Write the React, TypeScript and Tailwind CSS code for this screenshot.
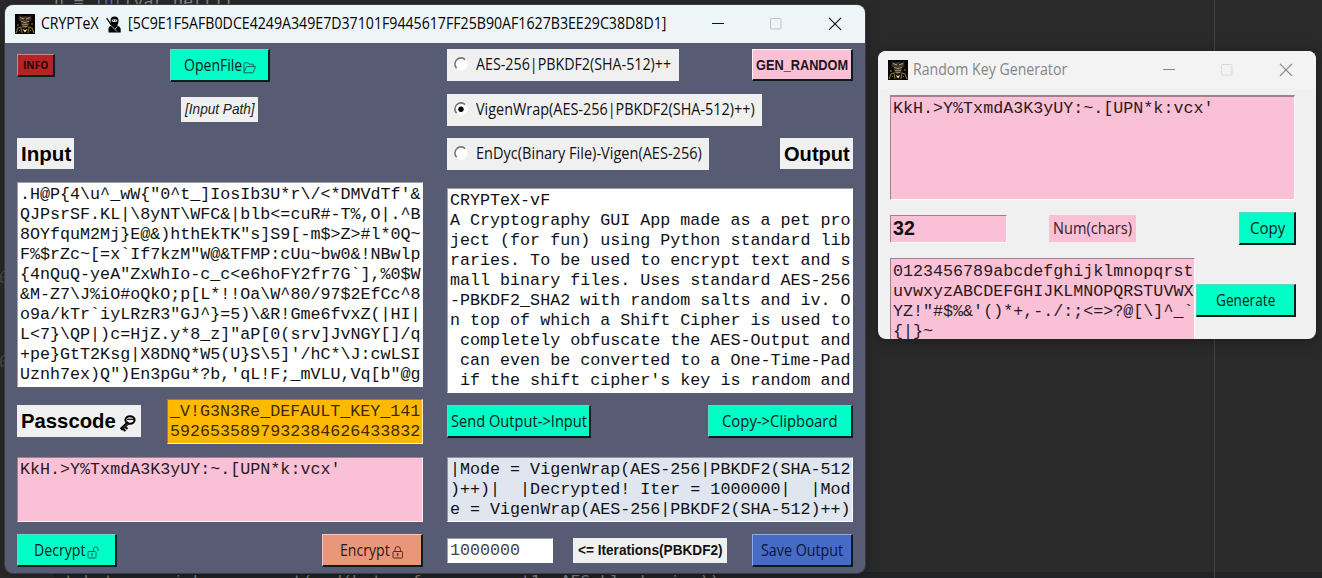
import { useLayoutEffect, useRef, type ReactNode } from "react";

function Fit({ w, children, className = "" }: { w: number; children: string; className?: string }) {
  const ref = useRef<HTMLSpanElement>(null);
  useLayoutEffect(() => {
    const el = ref.current;
    if (el) el.style.transform = `scaleX(${w / el.offsetWidth})`;
  }, [w, children]);
  return (
    <span className={`flex shrink-0 ${className}`} style={{ width: w }}>
      <span ref={ref} className="inline-block shrink-0 origin-left whitespace-pre">{children}</span>
    </span>
  );
}

const ui = "font-['Open_Sans','Noto_Sans',sans-serif]";
const arial = "font-['Liberation_Sans',Arial,sans-serif]";
const mono = "font-['Liberation_Mono','Courier_New',monospace] text-[16.7px] leading-[20px] whitespace-pre";

function Btn({ className, children }: { className: string; children: ReactNode }) {
  return (
    <button
      className={`flex shrink-0 items-center justify-center border-2 border-t-[1px] border-l-[1px] border-r-[#061f1c] border-b-[#061f1c] text-[15.5px] leading-5 text-[#06211e] ${className}`}
    >
      {children}
    </button>
  );
}

const green = "bg-[#00ffc6] border-t-[#5fd9c0] border-l-[#5fd9c0]";

function Radio({ on, w, className, children }: { on?: boolean; w: number; className: string; children: string }) {
  return (
    <label className={`flex h-8 shrink-0 items-center bg-[#f0f0f0] pl-[7px] text-[15.5px] text-[#111] ${className}`}>
      <svg width="14" height="14" viewBox="0 0 14 14" className="mr-2 -mt-[3px] shrink-0">
        <circle cx="7" cy="7" r="6" fill="#fff" />
        <path d="M2.7 11.3A6 6 0 0 1 11.3 2.7" fill="none" stroke="#777" strokeWidth="1.6" />
        <path d="M11.3 2.7A6 6 0 0 1 2.7 11.3" fill="none" stroke="#fff" strokeWidth="1.2" />
        {on && <circle cx="7" cy="7.2" r="2.7" fill="#000" />}
      </svg>
      <Fit w={w}>{children}</Fit>
    </label>
  );
}

function AppIcon() {
  return (
    <svg width="20" height="20" viewBox="0 0 20 20" className="shrink-0">
      <rect width="20" height="20" fill="#090706" />
      <path d="M4 1l2 2 4-1 4 1 2-2 .5 5-2.500 2H6L3.500 6z" fill="#3f3327" />
      <path d="M5 3.500l4 1.500M15 3.500l-4 1.500M6 7.500l4 1 4-1" stroke="#b39c80" strokeWidth="1" fill="none" />
      <path d="M6 9h8l-1 4-3 1.500-3-1.500z" fill="#4f4132" />
      <path d="M7 10.500h6M8 12.500h4" stroke="#a08a6c" strokeWidth=".8" />
      <path d="M1 19l2-5 3-1 1 6M19 19l-2-5-3-1-1 6" stroke="#80691f" strokeWidth="1.2" fill="none" />
      <path d="M7.500 15l2.500 3.500 2.500-3.500-2.500 1z" fill="#f1dfbd" />
      <path d="M4 16l1 1M15 16l1 1M2 11h2M16 10h2" stroke="#8f7a2c" />
    </svg>
  );
}

function Ninja() {
  return (
    <svg width="16" height="17" viewBox="0 0 16 17" className="shrink-0">
      <path d="M.7 2.2L5.500 9.300" stroke="#000" strokeWidth="1.200" />
      <path d="M4.500 4.500a4 4 0 0 1 8 0c0 2-.5 4-1.400 5 1.800.6 3.300 1.700 3.600 3.400V16.500H2.500V13c0-1.700 1-2.900 3.300-3.500C4.900 8.500 4.500 6.500 4.500 4.500z" fill="#000" />
      <path d="M5.800 3.700Q8.500 2.700 11.200 3.700V5.500Q8.500 6.300 5.800 5.500z" fill="#edf5f9" />
      <path d="M6.800 4.600h1M9.300 4.600h1" stroke="#000" strokeWidth=".9" />
      <path d="M5.500 10l5.500 5.500M11.500 10.500l-2.500 2.500" stroke="#d6e0e4" strokeWidth=".8" />
    </svg>
  );
}

function Controls({ color, dim }: { color: string; dim: string }) {
  return (
    <svg width="130" height="14" viewBox="0 0 130 14" fill="none" className="shrink-0">
      <path d="M0 6.500h12" stroke={color} />
      <rect x="58.500" y="1.500" width="10.500" height="10.500" rx="1" stroke={dim} />
      <path d="M117 .8l12 12M129 .8l-12 12" stroke={color} strokeWidth="1.200" />
    </svg>
  );
}

function Folder() {
  return (
    <svg width="13" height="12" viewBox="0 0 13 12" className="mt-[5px] ml-[1px] shrink-0" fill="none" stroke="#0b6b5a" strokeWidth="1">
      <path d="M1 10.500V1.500L2 .8h3l1 1.400h4.500V4.500M1 10.500L3.500 4.500H12.500L10 10.800H1z" />
    </svg>
  );
}

function Lock({ open, color }: { open?: boolean; color: string }) {
  return (
    <svg width="12" height="13" viewBox="0 0 12 13" className="mt-[5px] ml-[2px] shrink-0" fill="none" stroke={color}>
      <rect x="1" y="5.500" width={open ? 8 : 9.500} height="6.500" rx=".7" />
      <path d={open ? "M6.500 5.500V3.200a2.200 2.200 0 0 1 4.500 0V5" : "M3 5.500V3.300a2.700 2.700 0 0 1 5.400 0V5.500"} />
      <path d={open ? "M5 7.500v3M4 8h2" : "M5.700 7.500v3M4.700 8h2"} />
    </svg>
  );
}

function Key() {
  return (
    <svg width="17" height="17" viewBox="0 0 17 17" className="mt-[4px] ml-[3px] shrink-0" fill="none" stroke="#000">
      <ellipse cx="11" cy="5" rx="4.600" ry="3.700" strokeWidth="2" />
      <path d="M8 4.300h7.500" strokeWidth="1.200" />
      <path d="M9.500 7.500L2 14.500" strokeWidth="3.200" />
      <path d="M2 12.500l4.500 3.500M4.500 10.500l4 3.500" strokeWidth="2" />
      <path d="M9 8.500L4 13.500" stroke="#8a8a8a" strokeWidth=".7" />
    </svg>
  );
}

function FoldMark({ className }: { className: string }) {
  return (
    <svg width="5" height="14" viewBox="0 0 5 14" fill="none" stroke="#55585c" className={className}>
      <path d="M5 1L1 5v8h4M2.500 8H5" />
    </svg>
  );
}

const inputText = [
  ".H@P{4\\u^_wW{\"0^t_]IosIb3U*r\\/<*DMVdTf'&",
  "QJPsrSF.KL|\\8yNT\\WFC&|blb<=cuR#-T%,O|.^B",
  "8OYfquM2Mj}E@&)hthEkTK\"s]S9[-m$>Z>#l*0Q~",
  "F%$rZc~[=x`If7kzM\"W@&TFMP:cUu~bw0&!NBwlp",
  "{4nQuQ-yeA\"ZxWhIo-c_c<e6hoFY2fr7G`],%0$W",
  "&M-Z7\\J%iO#oQkO;p[L*!!Oa\\W^80/97$2EfCc^8",
  "o9a/kTr`iyLRzR3\"GJ^}=5)\\&R!Gme6fvxZ(|HI|",
  "L<7}\\QP|)c=HjZ.y*8_z]\"aP[0(srv]JvNGY[]/q",
  "+pe}GtT2Ksg|X8DNQ*W5(U}S\\5]'/hC*\\J:cwLSI",
  "Uznh7ex)Q\")En3pGu*?b,'qL!F;_mVLU,Vq[b\"@g",
].join("\n");

const outputText = [
  "CRYPTeX-vF",
  "A Cryptography GUI App made as a pet pro",
  "ject (for fun) using Python standard lib",
  "raries. To be used to encrypt text and s",
  "mall binary files. Uses standard AES-256",
  "-PBKDF2_SHA2 with random salts and iv. O",
  "n top of which a Shift Cipher is used to",
  " completely obfuscate the AES-Output and",
  " can even be converted to a One-Time-Pad",
  " if the shift cipher's key is random and",
].join("\n");

const logText = [
  "|Mode = VigenWrap(AES-256|PBKDF2(SHA-512",
  ")++)|  |Decrypted! Iter = 1000000|  |Mod",
  "e = VigenWrap(AES-256|PBKDF2(SHA-512)++)",
].join("\n");

const keyText = "KkH.>Y%TxmdA3K3yUY:~.[UPN*k:vcx'";
const charText = "0123456789abcdefghijklmnopqrst\nuvwxyzABCDEFGHIJKLMNOPQRSTUVWX\nYZ!\"#$%&'()*+,-./:;<=>?@[\\]^_`\n{|}~";

function MainWindow() {
  return (
    <section className="absolute top-[5px] left-[5px] flex h-[568px] w-[860px] flex-col overflow-hidden rounded-lg bg-[#575b73] shadow-[0_0_0_1px_#3b3d42,0_2px_14px_rgba(0,0,0,0.35)]">
      <header className="flex h-[38px] shrink-0 items-center bg-[#edf5f9] pl-[10px] text-[15.5px] text-black">
        <AppIcon />
        <Fit w={58} className="ml-[6px]">CRYPTeX</Fit>
        <div className="mr-[6px] ml-[7px] mt-[1px]"><Ninja /></div>
        <Fit w={538}>[5C9E1F5AFB0DCE4249A349E7D37101F9445617FF25B90AF1627B3EE29C38D8D1]</Fit>
        <div className="ml-[46px]"><Controls color="#111" dim="#b9c2c6" /></div>
      </header>
      <div className="flex gap-6 px-3 pt-[6px]">
        <div className="flex w-[406px] flex-col">
          <div className="flex h-[33px] items-center">
            <Btn className="h-[23px] w-[38px] border-t-[#d98080] border-l-[#d98080] bg-[#b32428] font-bold">
              <Fit w={25} className="text-[11px] text-[#2c0707]">INFO</Fit>
            </Btn>
            <Btn className={`ml-[115px] h-[33px] w-[100px] ${green}`}>
              <Fit w={58}>OpenFile</Fit>
              <Folder />
            </Btn>
          </div>
          <div className={`mt-[15px] ml-[164px] flex h-[25px] w-[77px] items-center justify-center bg-[#f0f0f0] text-[14px] text-[#222] italic ${arial}`}>
            <Fit w={70}>[Input Path]</Fit>
          </div>
          <div className={`mt-4 flex h-[31px] w-[57px] items-center justify-center bg-[#f0f0f0] text-[21px] font-bold ${arial}`}>
            <Fit w={50}>Input</Fit>
          </div>
          <pre className={`mt-[13px] h-[205px] overflow-hidden border border-[#a0a0a0] border-r-white border-b-white bg-white pt-[2px] pl-[2px] text-[#111] ${mono}`}>{inputText}</pre>
          <div className="mt-3 flex h-[45px] items-center justify-between">
            <div className={`-mt-px flex h-8 w-[124px] items-center bg-[#f0f0f0] pl-1 text-[20.500px] font-bold ${arial}`}>
              <Fit w={95}>Passcode</Fit>
              <Key />
            </div>
            <pre className={`h-[45px] w-[256px] overflow-hidden border border-[#a27f20] border-r-[#fff0c0] border-b-[#fff0c0] bg-[#ffb900] pt-[2px] pl-[2px] text-[#3d2b00] ${mono}`}>{"_V!G3N3Re_DEFAULT_KEY_141\n5926535897932384626433832"}</pre>
          </div>
          <pre className={`mt-[13px] h-[65px] overflow-hidden border border-[#a0808c] border-r-[#fff0f6] border-b-[#fff0f6] bg-[#fac0d6] pt-[2px] pl-[2px] text-[#2a1a20] ${mono}`}>{keyText}</pre>
          <div className="mt-3 flex justify-between">
            <Btn className={`h-[33px] w-[100px] ${green}`}>
              <Fit w={51}>Decrypt</Fit>
              <Lock open color="#0b6b5a" />
            </Btn>
            <Btn className="h-[33px] w-[101px] border-t-[#f6c8b8] border-l-[#f6c8b8] bg-[#e9967a]">
              <Fit w={50} className="text-[#2e1a14]">Encrypt</Fit>
              <Lock color="#5a2c1e" />
            </Btn>
          </div>
        </div>
        <div className="flex w-[406px] flex-col">
          <div className="flex justify-between">
            <Radio w={195} className="w-[232px]">AES-256|PBKDF2(SHA-512)++</Radio>
            <Btn className={`h-8 w-[101px] border-t-[#fff0f6] border-l-[#fff0f6] bg-[#fac0d6] font-bold ${arial}`}>
              <Fit w={92} className="text-[14px] text-[#22141a]">GEN_RANDOM</Fit>
            </Btn>
          </div>
          <Radio on w={279} className="mt-[13px] w-[315px]">VigenWrap(AES-256|PBKDF2(SHA-512)++)</Radio>
          <div className="mt-3 flex justify-between">
            <Radio w={226} className="w-[262px]">EnDyc(Binary File)-Vigen(AES-256)</Radio>
            <div className={`flex h-[31px] w-[73px] items-center justify-center bg-[#f0f0f0] text-[21px] font-bold ${arial}`}>
              <Fit w={66}>Output</Fit>
            </div>
          </div>
          <pre className={`mt-[18px] h-[205px] overflow-hidden border border-[#a0a0a0] border-r-white border-b-white bg-white pt-[2px] pl-[2px] text-[#111] ${mono}`}>{outputText}</pre>
          <div className="mt-3 flex justify-between">
            <Btn className={`h-[33px] w-[144px] ${green}`}>
              <Fit w={136}>{"Send Output->Input"}</Fit>
            </Btn>
            <Btn className={`h-[33px] w-[145px] ${green}`}>
              <Fit w={116}>{"Copy->Clipboard"}</Fit>
            </Btn>
          </div>
          <pre className={`mt-[19px] h-[65px] overflow-hidden border border-[#90949c] border-r-white border-b-white bg-[#e0e6f0] pt-[2px] pl-[2px] text-[#111] ${mono}`}>{logText}</pre>
          <div className="mt-3 flex h-[33px] items-center">
            <div className={`flex h-[25px] w-[106px] items-center border border-[#a0a0a0] border-r-white border-b-white bg-white pl-[2px] text-[#444] ${mono}`}>1000000</div>
            <div className={`ml-5 flex h-[25px] w-[154px] items-center justify-center bg-[#f0f0f0] text-[14px] font-bold text-[#111] ${arial}`}>
              <Fit w={145}>{"<= Iterations(PBKDF2)"}</Fit>
            </div>
            <Btn className="ml-[25px] h-[33px] w-[101px] border-t-[#8fa8e0] border-l-[#8fa8e0] bg-[#466bc5]">
              <Fit w={82} className="text-[#0a1638]">Save Output</Fit>
            </Btn>
          </div>
        </div>
      </div>
    </section>
  );
}

function KeyWindow() {
  return (
    <section className="absolute top-[51px] left-[878px] flex h-[288px] w-[438px] flex-col overflow-hidden rounded-lg bg-[#f0f0f0] shadow-[0_2px_14px_rgba(0,0,0,0.35)]">
      <header className="flex h-[38px] shrink-0 items-center bg-[#f3f3f3] pl-[10px] text-[15.5px] text-[#858585]">
        <AppIcon />
        <Fit w={154} className="ml-[5px]">Random Key Generator</Fit>
        <div className="ml-[96px]"><Controls color="#858585" dim="#dadada" /></div>
      </header>
      <div className="flex flex-col pt-[6px] pl-3">
        <pre className={`h-[105px] w-[405px] shrink-0 border border-t-2 border-[#a0808c] border-r-white border-b-white bg-[#fac0d6] pt-[2px] pl-[2px] text-[#2a1a20] ${mono}`}>{keyText}</pre>
        <div className="mt-3 flex h-[33px] items-center">
          <div className={`flex h-7 w-[117px] items-center border border-[#a0808c] border-r-white border-b-white bg-[#fac0d6] pl-[2px] text-[20.500px] font-bold text-[#111] ${arial}`}>
            <Fit w={22}>32</Fit>
          </div>
          <div className="ml-[42px] flex h-[27px] w-[87px] items-center justify-center bg-[#fac0d6] text-[15.500px] text-[#33232a]">
            <Fit w={79}>Num(chars)</Fit>
          </div>
          <Btn className={`ml-[103px] h-[33px] w-[57px] ${green}`}>
            <Fit w={35}>Copy</Fit>
          </Btn>
        </div>
        <div className="mt-[13px] flex items-start">
          <pre className={`h-[100px] w-[305px] shrink-0 border border-[#a0808c] border-r-white bg-[#fac0d6] pt-[3px] pl-[2px] text-[#2a1a20] ${mono}`}>{charText}</pre>
          <Btn className={`mt-[26px] ml-px h-[33px] w-[100px] ${green}`}>
            <Fit w={59}>Generate</Fit>
          </Btn>
        </div>
      </div>
    </section>
  );
}

export default function App() {
  return (
    <main className={`relative flex h-[578px] w-[1322px] flex-col justify-between overflow-hidden bg-[#2a2a2a] ${ui}`}>
      <pre className="-mt-[8px] ml-[54px] font-['DejaVu_Sans_Mono',monospace] text-[16.5px] leading-5 text-[#858b93]">
        n = <span className="text-[#6c6ea0]">int</span>(var.get())
      </pre>
      <pre className="-mb-[14px] ml-[54px] bg-[#222324] font-['DejaVu_Sans_Mono',monospace] text-[16.5px] leading-5 text-[#7d838b]">
        {"ct_bytes = cipher.encrypt(pad(bytes_from_encrypt1, AES.block_size))"}
      </pre>
      <div className="absolute top-0 left-[1214px] h-full w-px bg-[#444]" />
      <FoldMark className="absolute top-[269px] left-0" />
      <FoldMark className="absolute top-[353px] left-0" />
      <MainWindow />
      <KeyWindow />
    </main>
  );
}
